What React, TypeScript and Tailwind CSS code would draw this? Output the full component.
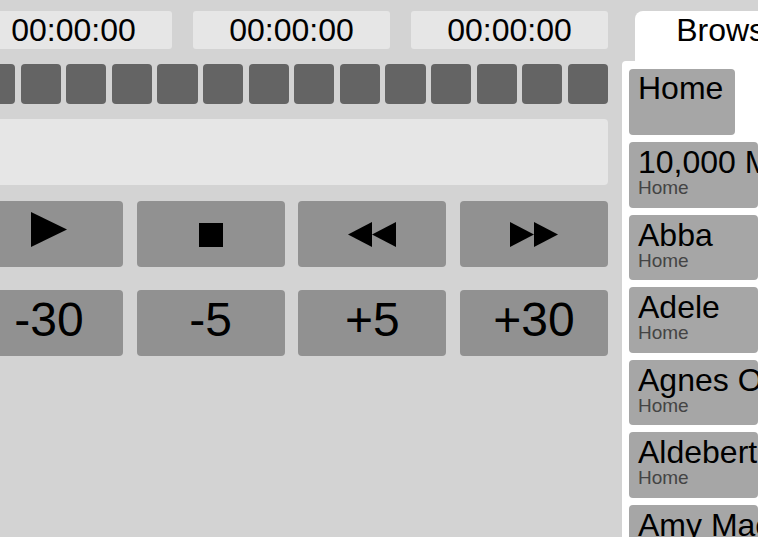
import React from "react";

const times = ["00:00:00", "00:00:00", "00:00:00"];
const skips = ["-30", "-5", "+5", "+30"];
const artists = ["10,000 Maniacs", "Abba", "Adele", "Agnes Obel", "Aldebert", "Amy Macdonald"];

function PlayIcon() {
  return (
    <svg width="36" height="35" viewBox="0 0 36 35">
      <polygon points="0,0 36,17.5 0,35" fill="#000" />
    </svg>
  );
}

function StopIcon() {
  return (
    <svg width="24" height="24" viewBox="0 0 24 24">
      <rect x="0" y="0" width="24" height="24" fill="#000" />
    </svg>
  );
}

function RewindIcon() {
  return (
    <svg width="48" height="25" viewBox="0 0 48 25">
      <polygon points="0,12.5 24,0 24,25" fill="#000" />
      <polygon points="24,12.5 48,0 48,25" fill="#000" />
    </svg>
  );
}

function ForwardIcon() {
  return (
    <svg width="48" height="25" viewBox="0 0 48 25">
      <polygon points="0,0 24,12.5 0,25" fill="#000" />
      <polygon points="24,0 48,12.5 24,25" fill="#000" />
    </svg>
  );
}

export default function App() {
  const transport = [<PlayIcon key="p" />, <StopIcon key="s" />, <RewindIcon key="r" />, <ForwardIcon key="f" />];

  return (
    <div className="flex h-screen w-screen overflow-hidden bg-[#d3d3d3] font-['Liberation_Sans',Arial,sans-serif] text-black">
      {/* player column, scrolled a little to the left */}
      <div className="-ml-[25px] flex w-[633px] shrink-0 flex-col pt-[11px]">
        <div className="grid grid-cols-3 gap-[21px]">
          {times.map((t, i) => (
            <div key={i} className="h-[38px] rounded-[3px] bg-[#e6e6e6] pt-[1px] text-center text-[32px] leading-[37px]">
              {t}
            </div>
          ))}
        </div>

        <div className="mt-[15px] grid h-[40px] grid-cols-[repeat(14,minmax(0,1fr))] gap-[5.5px]">
          {Array.from({ length: 14 }).map((_, i) => (
            <div key={i} className="rounded-[4px] bg-[#646464]" />
          ))}
        </div>

        <div className="mt-[15px] h-[66px] rounded-[4px] bg-[#e6e6e6]" />

        <div className="mt-[16px] grid h-[66px] grid-cols-4 gap-[13.67px]">
          {transport.map((icon, i) => (
            <button key={i} className="flex items-end justify-center rounded-[4px] bg-[#919191] pb-[20px]">
              {icon}
            </button>
          ))}
        </div>

        <div className="mt-[23px] grid h-[66px] grid-cols-4 gap-[13.67px]">
          {skips.map((s) => (
            <button key={s} className="flex items-start justify-center rounded-[4px] bg-[#919191] pt-[6px] text-[48px] leading-none">
              {s}
            </button>
          ))}
        </div>
      </div>

      {/* browser */}
      <div className="ml-[14px] flex min-w-0 flex-1 flex-col">
        <div className="ml-[13px] mt-[11px] h-[50px] w-[189px] shrink-0 rounded-t-[8px] bg-white pt-[1px] text-center text-[32px] leading-[37px]">
          Browse
        </div>
        <div className="flex flex-1 flex-col gap-[7px] rounded-tl-[4px] bg-white pl-[7px] pt-[8px]">
          <div className="h-[66px] w-[106px] shrink-0 rounded-[4px] bg-[#a6a6a6] px-[9px] pt-[3px] text-[32px] leading-[32px]">
            Home
          </div>
          {artists.map((a) => (
            <div key={a} className="h-[65.5px] shrink-0 overflow-hidden whitespace-nowrap rounded-[4px] bg-[#a6a6a6] px-[9px] pt-[4px]">
              <div className="text-[32px] leading-[32px]">{a}</div>
              <div className="text-[19px] leading-[19px] text-[#444]">Home</div>
            </div>
          ))}
        </div>
      </div>
    </div>
  );
}
